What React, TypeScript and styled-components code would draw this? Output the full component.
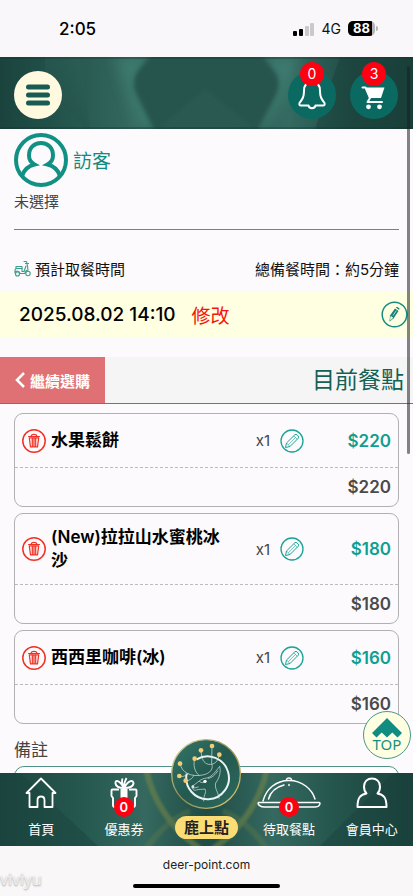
import React from "react";
import styled, { createGlobalStyle } from "styled-components";

const GlobalStyle = createGlobalStyle`
  *, *::before, *::after { box-sizing: border-box; }
  body {
    margin: 0;
    background: #faf9fa;
    color: #111;
    font-family: Inter, "Noto Sans CJK TC", sans-serif;
    font-size: 15px;
  }
  button, textarea { font-family: inherit; }
  button { border: 0; padding: 0; background: none; color: inherit; cursor: pointer; }
  a { color: inherit; text-decoration: none; }
`;

const Screen = styled.div`
  display: flex;
  flex-direction: column;
  height: 100vh;
  overflow: hidden;
  background: #fcfafc;
`;

/* ---------- status bar ---------- */

const StatusBar = styled.div`
  flex: none;
  height: 57px;
  padding: 0 38px 0 59px;
  display: flex;
  align-items: center;
  justify-content: space-between;
  background: #f9f7f9;
`;

const Clock = styled.time`
  font-size: 17px;
  font-weight: 500;
  color: #000;
`;

const StatusIcons = styled.div`
  display: flex;
  align-items: center;
  gap: 7px;
  font-size: 14px;
`;

const Battery = styled.span`
  position: relative;
  width: 27px;
  height: 15px;
  border-radius: 5px;
  background: linear-gradient(90deg, #000 88%, #b5b4b6 88%);
  color: #fff;
  font-size: 13px;
  font-weight: 700;
  line-height: 15px;
  text-align: center;
  &::after {
    content: "";
    position: absolute;
    right: -3px;
    top: 5px;
    width: 2px;
    height: 5px;
    border-radius: 0 2px 2px 0;
    background: #b5b4b6;
  }
`;

/* ---------- site header ---------- */

const Header = styled.header`
  position: relative;
  flex: none;
  height: 72px;
  padding: 0 15px 0 14px;
  display: flex;
  align-items: center;
  justify-content: space-between;
  background: #24524b;
`;

const Backdrop = styled.svg`
  position: absolute;
  inset: 0;
  width: 100%;
  height: 100%;
`;

const MenuButton = styled.button`
  position: relative;
  display: grid;
  place-items: center;
  width: 48px;
  height: 48px;
  margin-top: 4px;
  border-radius: 50%;
  background: #fffadf;
`;

const HeaderActions = styled.div`
  display: flex;
  gap: 14px;
  margin-top: 4px;
`;

const RoundAction = styled.a`
  position: relative;
  width: 48px;
  height: 48px;
  border-radius: 50%;
  background: #0a6a61;
  & > svg { display: block; }
`;

const Badge = styled.span<{ $small?: boolean }>`
  position: absolute;
  left: 50%;
  top: ${(p) => (p.$small ? "24px" : "-9px")};
  transform: translateX(-50%);
  width: ${(p) => (p.$small ? 20 : 24)}px;
  height: ${(p) => (p.$small ? 20 : 24)}px;
  border-radius: 50%;
  background: #fd0012;
  color: #fff;
  font-size: ${(p) => (p.$small ? 13 : 14)}px;
  font-weight: ${(p) => (p.$small ? 600 : 400)};
  line-height: ${(p) => (p.$small ? 20 : 24)}px;
  text-align: center;
`;

/* ---------- page body ---------- */

const Body = styled.div`
  position: relative;
  flex: 1;
  min-height: 0;
  display: flex;
  flex-direction: column;
`;

const Content = styled.main`
  flex: 1;
  min-height: 0;
  overflow: hidden;
`;

const Visitor = styled.section`
  margin: 3px 14px 0;
  padding-bottom: 16px;
  border-bottom: 1px solid #3e9c89;
`;

const VisitorHead = styled.div`
  display: flex;
  align-items: center;
  gap: 5px;
  height: 55px;
  color: #128a7e;
  font-size: 19px;
`;

const Muted = styled.p`
  margin: 4px 0 0;
  line-height: 22px;
  color: #444;
`;

const PickupInfo = styled.div`
  display: flex;
  align-items: center;
  justify-content: space-between;
  padding: 0 14px;
  margin-top: 26px;
  height: 24px;
`;

const PickupLabel = styled.span`
  display: flex;
  align-items: center;
  gap: 4px;
`;

const TimeBar = styled.div`
  display: flex;
  align-items: center;
  height: 46px;
  margin-top: 11px;
  padding: 0 5px 0 19px;
  background: #ffffe1;
`;

const PickupTime = styled.time`
  font-size: 19px;
  font-weight: 500;
  color: #000;
`;

const ChangeButton = styled.button`
  margin-left: 16px;
  margin-right: auto;
  font-size: 19px;
  color: #f5150c;
`;

const IconButton = styled.button`
  display: block;
  line-height: 0;
  svg { display: block; }
`;

const SectionBar = styled.div`
  display: flex;
  align-items: stretch;
  justify-content: space-between;
  height: 47px;
  margin-top: 20px;
  border-bottom: 1px solid #3d8f84;
  background: #f5f5f6;
`;

const BackLink = styled.a`
  display: flex;
  align-items: center;
  gap: 5px;
  padding: 0 15px 0 15px;
  background: #df7174;
  color: #fff;
  font-weight: 700;
`;

const SectionTitle = styled.h1`
  margin: 0 9px 0 0;
  align-self: center;
  font-size: 23px;
  line-height: 30px;
  font-weight: 400;
  color: #155f55;
`;

const OrderList = styled.ul`
  list-style: none;
  margin: 9px 14px 0;
  padding: 0;
  display: flex;
  flex-direction: column;
  gap: 6px;
`;

const OrderCard = styled.li`
  border: 1px solid #b1b0b3;
  border-radius: 9px;
`;

const OrderMain = styled.div`
  display: grid;
  grid-template-columns: 24px minmax(0, 1fr) auto auto 87px;
  align-items: center;
  min-height: 54px;
  padding: 12px 7px;
  border-bottom: 1px dashed #bcbcbe;
`;

const ItemName = styled.span`
  padding: 0 26px 0 5px;
  font-size: 17px;
  line-height: 23px;
  font-weight: 600;
  color: #000;
`;

const Quantity = styled.span`
  margin-right: 10px;
  color: #444;
`;

const Price = styled.span<{ $accent?: boolean }>`
  font-size: 17px;
  font-weight: 600;
  text-align: right;
  color: ${(p) => (p.$accent ? "#0e9f92" : "#4a4a4a")};
`;

const Subtotal = styled.div`
  display: flex;
  align-items: center;
  justify-content: flex-end;
  height: 38px;
  padding: 0 7px;
`;

const NoteField = styled.div`
  margin: 14px 14px 0;
`;

const NoteLabel = styled.label`
  display: block;
  font-size: 17px;
  line-height: 24px;
  color: #444;
`;

const NoteInput = styled.textarea`
  display: block;
  width: 100%;
  height: 80px;
  margin-top: 4px;
  padding: 8px 12px;
  border: 1px solid #4f9184;
  border-radius: 10px;
  background: #fff;
  resize: none;
`;

const ScrollThumb = styled.div`
  position: absolute;
  right: 3px;
  top: 9px;
  width: 3px;
  height: 388px;
  border-radius: 2px;
  background: rgba(30, 30, 32, 0.55);
`;

const TopLink = styled.a`
  position: absolute;
  right: 2px;
  bottom: 87px;
  width: 48px;
  height: 48px;
  border: 1px solid #4b9888;
  border-radius: 50%;
  background: #ffffe2;
  color: #159084;
  font-family: "Noto Sans", "Open Sans", sans-serif;
  font-size: 15px;
  line-height: 13px;
  text-align: center;
  svg { display: block; margin: 6px auto 0; }
`;

/* ---------- bottom navigation ---------- */

const BottomNav = styled.nav`
  position: relative;
  flex: none;
  display: grid;
  grid-template-columns: repeat(5, 1fr);
  height: 73px;
  background: #24524b;
  color: #fff;
`;

const NavItem = styled.a`
  position: relative;
  display: flex;
  flex-direction: column;
  align-items: center;
  padding-top: 3px;
  font-size: 13px;
  line-height: 20px;
  svg { display: block; margin-bottom: 9px; }
`;

const BrandItem = styled.a`
  position: relative;
  display: flex;
  flex-direction: column;
  align-items: center;
  margin-top: -34px;
  gap: 7px;
  svg { display: block; }
`;

const BrandPill = styled.span`
  padding: 0 9px;
  border-radius: 12px;
  background: #fcdc74;
  color: #222;
  font-size: 15px;
  line-height: 23px;
  font-weight: 600;
  white-space: nowrap;
`;

/* ---------- browser bar ---------- */

const BrowserBar = styled.footer`
  position: relative;
  flex: none;
  height: 50px;
  padding: 10px 0 8px;
  display: flex;
  flex-direction: column;
  align-items: center;
  justify-content: space-between;
  background: #f9f7f8;
  font-size: 12px;
  line-height: 18px;
  color: #222;
`;

const HomeIndicator = styled.span`
  width: 147px;
  height: 4px;
  border-radius: 2px;
  background: #000;
`;

const Watermark = styled.span`
  position: absolute;
  left: 0;
  bottom: 8px;
  color: #f1eff1;
  font-family: "Open Sans", sans-serif;
  font-size: 16px;
  line-height: 18px;
  text-shadow: 0 1px 2px #999;
`;

/* ---------- drawings ---------- */

const SignalIcon = () => (
  <svg width="22" height="14" viewBox="0 0 22 14" aria-hidden="true">
    <rect x="0" y="9" width="4" height="5" rx="1" fill="#000" />
    <rect x="6" y="7" width="4" height="7" rx="1" fill="#000" />
    <rect x="12" y="4" width="4" height="10" rx="1" fill="#c9c8ca" />
    <rect x="17" y="1" width="4" height="13" rx="1" fill="#c9c8ca" />
  </svg>
);

const HeaderArt = () => (
  <Backdrop viewBox="0 0 413 72" preserveAspectRatio="none" aria-hidden="true">
    <defs>
      <linearGradient id="h-base">
        <stop offset="0" stopColor="#1b433e" />
        <stop offset="0.12" stopColor="#215049" />
        <stop offset="0.32" stopColor="#34695f" />
        <stop offset="0.5" stopColor="#2a5851" />
        <stop offset="0.7" stopColor="#346a61" />
        <stop offset="0.85" stopColor="#204d46" />
        <stop offset="1" stopColor="#1b403b" />
      </linearGradient>
      <linearGradient id="h-left" x1="0" y1="1" x2="1" y2="0">
        <stop offset="0" stopColor="#1f4b45" />
        <stop offset="1" stopColor="#2d6259" stopOpacity="0.5" />
      </linearGradient>
      <filter id="h-soft"><feGaussianBlur stdDeviation="2" /></filter>
      <filter id="h-glow" x="-50%" width="200%"><feGaussianBlur stdDeviation="7" /></filter>
    </defs>
    <rect width="413" height="72" fill="url(#h-base)" />
    <path d="M45 0H80L90 72H85L45 28Z" fill="url(#h-left)" />
    <path d="M115 0L156 0L136 24L158 72L140 72Z" fill="#44867a" opacity="0.6" filter="url(#h-glow)" />
    <path d="M262 0H300L284 40L262 72L250 72L276 24Z" fill="#44867a" opacity="0.6" filter="url(#h-glow)" />
    <path d="M154 -6H258L274 14Q282 24 276 38L256 76H156L138 40Q130 26 138 14Z" fill="#28544d" filter="url(#h-soft)" />
    <path d="M205 32L255 72H158Z" fill="#2f6057" opacity="0.45" filter="url(#h-soft)" />
    <path d="M340 0H413V72H315Z" fill="#193d38" opacity="0.45" />
    <path d="M0 1H413M0 71H413" stroke="#17332f" strokeWidth="1" opacity="0.7" />
  </Backdrop>
);

const NavArt = () => (
  <Backdrop viewBox="0 0 413 73" preserveAspectRatio="none" aria-hidden="true">
    <defs>
      <linearGradient id="n-base">
        <stop offset="0" stopColor="#1d4640" />
        <stop offset="0.2" stopColor="#25584f" />
        <stop offset="0.35" stopColor="#35695f" />
        <stop offset="0.5" stopColor="#1f4c45" />
        <stop offset="0.66" stopColor="#35695f" />
        <stop offset="0.8" stopColor="#25574e" />
        <stop offset="1" stopColor="#1b413c" />
      </linearGradient>
      <filter id="n-soft"><feGaussianBlur stdDeviation="1" /></filter>
    </defs>
    <rect width="413" height="73" fill="url(#n-base)" />
    <path d="M20 0L98 73H0V0Z" fill="#1a403b" opacity="0.4" />
    <path d="M393 0L320 73H413V0Z" fill="#1a403b" opacity="0.4" />
    <g fill="none" stroke="#7d8a45" opacity="0.5" strokeWidth="6" filter="url(#n-soft)">
      <path d="M146 -4Q156 44 200 76" />
      <path d="M267 -4Q257 44 213 76" />
      <path d="M146 76Q165 48 190 38" opacity="0.5" />
      <path d="M267 76Q248 48 223 38" opacity="0.5" />
    </g>
  </Backdrop>
);

const MenuIcon = () => (
  <svg width="24" height="22" viewBox="0 0 24 22" aria-hidden="true" fill="none" stroke="#175c54" strokeWidth="5" strokeLinecap="round">
    <path d="M2.500 3H21.500M2.500 11H21.500M2.500 19H21.500" />
  </svg>
);

const BellIcon = () => (
  <svg width="48" height="48" viewBox="0 0 48 48" aria-hidden="true" fill="none" stroke="#fff" strokeWidth="2" strokeLinejoin="round" strokeLinecap="round">
    <path d="M24 11C18 11 16 15.500 16 20C16 26 14.500 28 11.500 32C11 33.500 11.500 34.500 13 34.500H20.500C21 38 27 38 27.500 34.500H35C36.500 34.500 37 33.500 36.500 32C33.500 28 32 26 32 20C32 15.500 30 11 24 11Z" />
  </svg>
);

const CartIcon = () => (
  <svg width="48" height="48" viewBox="0 0 48 48" aria-hidden="true" fill="#fff">
    <path d="M15 16.500H34.500L31 27H19.500Z" />
    <path d="M12.500 16.500H15.500L20 27L17.500 31H32" fill="none" stroke="#fff" strokeWidth="2" strokeLinecap="round" strokeLinejoin="round" />
    <circle cx="18.500" cy="35.800" r="2.400" />
    <circle cx="29.500" cy="35.800" r="2.400" />
  </svg>
);

const AvatarIcon = () => (
  <svg width="54" height="54" viewBox="0 0 54 54" aria-hidden="true" fill="none" stroke="#129083" strokeWidth="4">
    <circle cx="27" cy="27" r="25" />
    <path d="M8 43C10 37 14 33 20.500 31.500C16 29 15 26 15 22.500C15 15 20 10 27 10C34 10 39 15 39 22.500C39 26 38 29 33.500 31.500C40 33 44 37 46 43" />
  </svg>
);

const ScooterIcon = () => (
  <svg width="17" height="17" viewBox="0 0 17 17" aria-hidden="true" fill="none" stroke="#3e9c8d" strokeWidth="1.100" strokeLinecap="round" strokeLinejoin="round">
    <path d="M10 1.500H12.500L13.500 6L14 10C11.500 10.500 11 12 11 13.500H6C6 11 2 10 1 13V10.500C1 9 2 8.500 3 8.500H8V11.500H10L12 6" />
    <path d="M2 6.500H8V8.500H2ZM11.500 3.500H14.500" />
    <circle cx="3.500" cy="14" r="2" />
    <circle cx="14" cy="13.500" r="2.200" />
  </svg>
);

const SolidPencilIcon = () => (
  <svg width="27" height="27" viewBox="0 0 27 27" aria-hidden="true">
    <circle cx="13.500" cy="13.500" r="12.300" fill="none" stroke="#168c80" strokeWidth="1.500" />
    <path d="M8.500 20.500L9 14.500L14 7.500L17.500 10L12.500 17.500Z" fill="#148277" />
    <path d="M14.800 6.500L16 5.800L18.500 7.500L18.200 9Z" fill="#148277" />
    <path d="M9.800 15.500L11.800 16.800L9.500 18.800Z M12 14.500L15.300 9.700" fill="#ffffe1" stroke="#ffffe1" strokeWidth="0.700" />
  </svg>
);

const PencilIcon = () => (
  <svg width="24" height="24" viewBox="0 0 24 24" aria-hidden="true" fill="none" stroke="#1aa396" strokeWidth="1" strokeLinejoin="round">
    <circle cx="12" cy="12" r="11" strokeWidth="1.300" />
    <path d="M5.500 18.500L6.500 14L14.800 5.800Q16 4.800 17.200 6L18.200 7Q19.200 8.200 18.200 9.300L10 17.500Z" />
    <path d="M6.500 14L10 17.500M13.800 6.800L17.200 10.200M8.300 15.800L15.500 8.500" strokeWidth="0.600" />
  </svg>
);

const TrashIcon = () => (
  <svg width="24" height="24" viewBox="0 0 24 24" aria-hidden="true" fill="none" stroke="#f03224" strokeWidth="1.200" strokeLinejoin="round" strokeLinecap="round">
    <circle cx="12" cy="12" r="11.200" strokeWidth="1.500" />
    <path d="M6.500 7.500H17.500M9 7.200Q9.500 5.300 12 5.300Q14.500 5.300 15 7.200M7.300 8.800H16.700L15.500 17.800H8.500ZM10.300 9.500V17M12 9.500V17M13.700 9.500V17" />
  </svg>
);

const ChevronIcon = () => (
  <svg width="10" height="16" viewBox="0 0 10 16" aria-hidden="true" fill="none" stroke="#fff" strokeWidth="2.500">
    <path d="M9 1L2 8L9 15" />
  </svg>
);

const TopArrowIcon = () => (
  <svg width="30" height="20" viewBox="0 0 30 20" aria-hidden="true" fill="#108c80">
    <path d="M15 0L30 15L25.500 19.500L20.300 14.500L15 19.500L9.700 14.500L4.500 19.500L0 15Z" />
  </svg>
);

const HomeIcon = () => (
  <svg width="34" height="34" viewBox="0 0 34 34" aria-hidden="true" fill="none" stroke="#fff" strokeWidth="1.800" strokeLinejoin="round">
    <path d="M17 2.500L31.500 17H28.500V31H20.500V24Q20.500 20.500 17 20.500Q13.500 20.500 13.500 24V31H5.500V17H2.500Z" />
  </svg>
);

const GiftIcon = () => (
  <svg width="34" height="34" viewBox="0 0 34 34" aria-hidden="true" fill="none" stroke="#fff" strokeWidth="1.900" strokeLinejoin="round">
    <path d="M12 13.500H5.500Q4.500 13.500 4.500 14.500V20L6 22V29Q6 31 8 31H26Q28 31 28 29V22L29.500 20V14.500Q29.500 13.500 28.500 13.500H22" />
    <path d="M13.500 13H20.500V31H13.500Z" fill="#fff" stroke="none" />
    <path d="M17 12C12 3 8 4 8.500 7.500C9 11 13 12 17 12C21 12 26 11 26.500 7.500C26.500 4 22 3 17 12ZM17 12Q14 6 15.500 2.500M17 12Q17 6 19.500 2" />
  </svg>
);

const ClocheIcon = () => (
  <svg width="64" height="34" viewBox="0 0 64 34" aria-hidden="true" fill="none" stroke="#fff" strokeWidth="1.500" strokeLinecap="round" strokeLinejoin="round">
    <path d="M6 25C9 13 19 4.500 32 4.500C45 4.500 55 13 58 23M29.500 4.500C29 1 35 1 34.500 4.500" />
    <path d="M11.500 23C13.500 16 19 11 27 9M32 8.500V9.500" />
    <path d="M2 26.500H62C64 26.500 63 31 58 31H8C3 31 0 28 1.500 26.500Z" />
  </svg>
);

const MemberIcon = () => (
  <svg width="34" height="34" viewBox="0 0 34 34" aria-hidden="true" fill="none" stroke="#fff" strokeWidth="2" strokeLinejoin="round">
    <path d="M2.500 31C2.500 22 5 18.500 11.500 17.500C9.500 15.500 9 13 9 10.500C9 5.500 12.500 2.500 17 2.500C21.500 2.500 25 5.500 25 10.500C25 13 24.500 15.500 22.500 17.500C29 18.500 31.500 22 31.500 31Z" />
  </svg>
);

const antlerTips = [
  [27, 74], [25, 111], [44, 125], [71, 59], [90, 34], [123, 21], [145, 47],
];

const DeerEmblem = () => (
  <svg width="70" height="70" viewBox="0 0 210 210" aria-hidden="true" fill="none">
    <defs>
      <linearGradient id="d-ring" x1="0" y1="0" x2="1" y2="1">
        <stop offset="0" stopColor="#e5dc9c" />
        <stop offset="0.5" stopColor="#8a8a50" />
        <stop offset="1" stopColor="#efd070" />
      </linearGradient>
      <linearGradient id="d-fill" x1="0" y1="0" x2="1" y2="1">
        <stop offset="0" stopColor="#33776b" />
        <stop offset="0.5" stopColor="#24594f" />
        <stop offset="1" stopColor="#2c6a5f" />
      </linearGradient>
    </defs>
    <circle cx="105" cy="105" r="103" fill="url(#d-fill)" stroke="url(#d-ring)" strokeWidth="4" />
    <path d="M77 61A64 64 0 0 1 171 98A64 64 0 1 1 47 104" stroke="#e8f3f4" strokeWidth="6" />
    <g stroke="#dce9e6" strokeWidth="2" strokeLinecap="round" strokeLinejoin="round">
      <path d="M27 74C32 100 58 115 95 108C118 104 128 88 122 74L123 21" />
      <path d="M25 111C38 116 45 108 52 104M44 125C56 126 64 118 68 110M71 59C66 78 70 98 84 109M90 34C92 62 98 72 112 76C132 78 142 66 145 47" />
      <path d="M63 142C80 132 88 118 108 117C126 112 136 94 146 82C150 98 146 116 134 132C130 150 142 158 144 178" />
      <path d="M63 142C62 150 68 156 76 153C84 150 92 152 102 150C108 160 96 172 98 186M112 118C122 118 134 106 140 96M66 148L82 144M86 128C92 132 98 132 104 128" />
    </g>
    <circle cx="102" cy="127" r="5" fill="#fff" />
    <circle cx="66" cy="143" r="4" fill="#dce9e6" />
    {antlerTips.map(([x, y]) => (
      <circle key={`${x}-${y}`} cx={x} cy={y} r="7" fill="#f3cd73" />
    ))}
  </svg>
);

/* ---------- page ---------- */

const items = [
  { name: "水果鬆餅", qty: 1, price: 220 },
  { name: "(New)拉拉山水蜜桃冰沙", qty: 1, price: 180 },
  { name: "西西里咖啡(冰)", qty: 1, price: 160 },
];

export default function App() {
  return (
    <Screen>
      <GlobalStyle />
      <StatusBar>
        <Clock>2:05</Clock>
        <StatusIcons>
          <SignalIcon />
          <span>4G</span>
          <Battery>88</Battery>
        </StatusIcons>
      </StatusBar>

      <Body>
        <Header>
          <HeaderArt />
          <MenuButton aria-label="選單"><MenuIcon /></MenuButton>
          <HeaderActions>
            <RoundAction href="#notices" aria-label="通知"><BellIcon /><Badge>0</Badge></RoundAction>
            <RoundAction href="#cart" aria-label="購物車"><CartIcon /><Badge>3</Badge></RoundAction>
          </HeaderActions>
        </Header>

        <Content>
          <Visitor>
            <VisitorHead><AvatarIcon /><span>訪客</span></VisitorHead>
            <Muted>未選擇</Muted>
          </Visitor>

          <PickupInfo>
            <PickupLabel><ScooterIcon />預計取餐時間</PickupLabel>
            <span>總備餐時間：約5分鐘</span>
          </PickupInfo>
          <TimeBar>
            <PickupTime>2025.08.02 14:10</PickupTime>
            <ChangeButton>修改</ChangeButton>
            <IconButton aria-label="編輯取餐時間"><SolidPencilIcon /></IconButton>
          </TimeBar>

          <SectionBar>
            <BackLink href="#menu"><ChevronIcon />繼續選購</BackLink>
            <SectionTitle>目前餐點</SectionTitle>
          </SectionBar>

          <OrderList>
            {items.map((item) => (
              <OrderCard key={item.name}>
                <OrderMain>
                  <IconButton aria-label={`刪除${item.name}`}><TrashIcon /></IconButton>
                  <ItemName>{item.name}</ItemName>
                  <Quantity>x{item.qty}</Quantity>
                  <IconButton aria-label={`編輯${item.name}`}><PencilIcon /></IconButton>
                  <Price $accent>${item.price}</Price>
                </OrderMain>
                <Subtotal><Price>${item.price * item.qty}</Price></Subtotal>
              </OrderCard>
            ))}
          </OrderList>

          <NoteField>
            <NoteLabel htmlFor="note">備註</NoteLabel>
            <NoteInput id="note" />
          </NoteField>
        </Content>

        <BottomNav>
          <NavArt />
          <NavItem href="#home"><HomeIcon />首頁</NavItem>
          <NavItem href="#coupons"><GiftIcon /><Badge $small>0</Badge>優惠券</NavItem>
          <BrandItem href="#deer"><DeerEmblem /><BrandPill>鹿上點</BrandPill></BrandItem>
          <NavItem href="#pending"><ClocheIcon /><Badge $small>0</Badge>待取餐點</NavItem>
          <NavItem href="#member"><MemberIcon />會員中心</NavItem>
        </BottomNav>

        <TopLink href="#top"><TopArrowIcon />TOP</TopLink>
        <ScrollThumb />
      </Body>

      <BrowserBar>
        <span>deer-point.com</span>
        <HomeIndicator />
        <Watermark>viviyu</Watermark>
      </BrowserBar>
    </Screen>
  );
}
